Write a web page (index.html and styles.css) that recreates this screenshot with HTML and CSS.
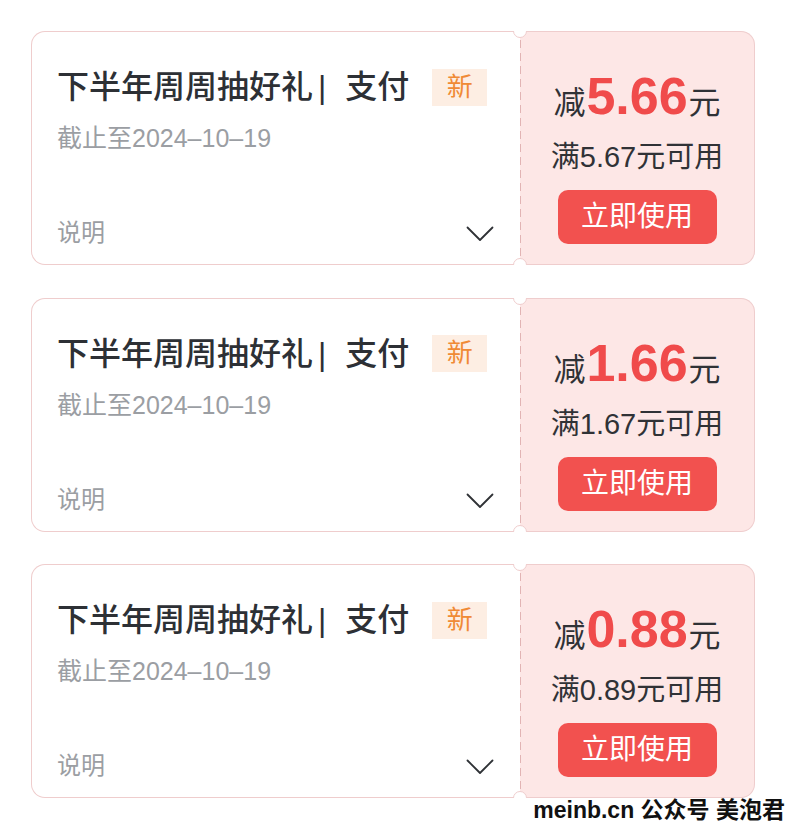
FILE: index.html
```html
<!DOCTYPE html>
<html lang="zh-CN">
<head>
<meta charset="utf-8">
<title>优惠券</title>
<link rel="stylesheet" href="styles.css">
</head>
<body>
<div class="list">
  <div class="coupon">
    <div class="info">
      <div class="title-row"><span class="title">下半年周周抽好礼<span class="bar">|</span>支付</span><span class="badge">新</span></div>
      <div class="date">截止至2024–10–19</div>
      <div class="desc-row"><span class="desc">说明</span><svg class="chev" width="28" height="16" viewBox="0 0 28 16"><polyline points="1.5,1.5 14,14 26.5,1.5" fill="none" stroke="#2f3236" stroke-width="1.8" stroke-linecap="round" stroke-linejoin="round"/></svg></div>
    </div>
    <div class="value">
      <div class="amount"><span class="unit">减</span><span class="num">5.66</span><span class="unit">元</span></div>
      <div class="cond">满5.67元可用</div>
      <button class="use">立即使用</button>
    </div>
    <span class="notch notch-top"></span><span class="notch notch-bottom"></span>
  </div>
  <div class="coupon">
    <div class="info">
      <div class="title-row"><span class="title">下半年周周抽好礼<span class="bar">|</span>支付</span><span class="badge">新</span></div>
      <div class="date">截止至2024–10–19</div>
      <div class="desc-row"><span class="desc">说明</span><svg class="chev" width="28" height="16" viewBox="0 0 28 16"><polyline points="1.5,1.5 14,14 26.5,1.5" fill="none" stroke="#2f3236" stroke-width="1.8" stroke-linecap="round" stroke-linejoin="round"/></svg></div>
    </div>
    <div class="value">
      <div class="amount"><span class="unit">减</span><span class="num">1.66</span><span class="unit">元</span></div>
      <div class="cond">满1.67元可用</div>
      <button class="use">立即使用</button>
    </div>
    <span class="notch notch-top"></span><span class="notch notch-bottom"></span>
  </div>
  <div class="coupon">
    <div class="info">
      <div class="title-row"><span class="title">下半年周周抽好礼<span class="bar">|</span>支付</span><span class="badge">新</span></div>
      <div class="date">截止至2024–10–19</div>
      <div class="desc-row"><span class="desc">说明</span><svg class="chev" width="28" height="16" viewBox="0 0 28 16"><polyline points="1.5,1.5 14,14 26.5,1.5" fill="none" stroke="#2f3236" stroke-width="1.8" stroke-linecap="round" stroke-linejoin="round"/></svg></div>
    </div>
    <div class="value">
      <div class="amount"><span class="unit">减</span><span class="num">0.88</span><span class="unit">元</span></div>
      <div class="cond">满0.89元可用</div>
      <button class="use">立即使用</button>
    </div>
    <span class="notch notch-top"></span><span class="notch notch-bottom"></span>
  </div>
</div>
<div class="mark">meinb.cn 公众号 美泡君</div>
</body>
</html>
```
FILE: styles.css
```css
html, body {
  margin: 0;
  padding: 0;
  background: #ffffff;
}
body {
  font-family: "Liberation Sans", "Noto Sans CJK SC", sans-serif;
  color: #303236;
}
.list {
  padding: 31px 32px 0 31px;
  display: flex;
  flex-direction: column;
  gap: 32.5px;
}
.coupon {
  position: relative;
  display: flex;
  height: 234px;
  overflow: hidden;
}
.info {
  width: 489px;
  box-sizing: border-box;
  border: 1px solid #efcdcd;
  border-right: none;
  border-radius: 14px 0 0 14px;
  background: #ffffff;
  padding: 35px 26px 15px 25px;
  display: flex;
  flex-direction: column;
}
.title-row {
  display: flex;
  align-items: center;
  height: 40px;
}
.title {
  font-size: 32px;
  line-height: 40px;
  font-weight: 500;
  color: #2d3035;
  white-space: nowrap;
}
.bar {
  display: inline-block;
  margin: 0 19px 0 5px;
  font-weight: 400;
}
.badge {
  margin-left: 23px;
  width: 55px;
  height: 37px;
  background: #fdeee3;
  color: #f08a35;
  font-size: 26px;
  line-height: 37px;
  text-align: center;
}
.date {
  margin-top: 15px;
  font-size: 25px;
  line-height: 32px;
  color: #9b9ea3;
}
.desc-row {
  margin-top: auto;
  height: 32px;
  display: flex;
  align-items: center;
  justify-content: space-between;
}
.desc {
  font-size: 24px;
  line-height: 32px;
  color: #9b9ea3;
}
.chev {
  display: block;
  margin-top: 2px;
}
.value {
  position: relative;
  flex: 1;
  background: #fde7e6;
  border: 1px solid #efcdcd;
  border-left: none;
  border-radius: 0 14px 14px 0;
  display: flex;
  flex-direction: column;
  align-items: center;
  padding-top: 39px;
}
.value::before {
  content: "";
  position: absolute;
  left: 0;
  top: 8px;
  bottom: 8px;
  width: 1px;
  background: repeating-linear-gradient(to bottom, #e2b4b4 0 8px, transparent 8px 13px);
}
.amount {
  line-height: 50px;
  height: 50px;
  white-space: nowrap;
  display: flex;
  align-items: baseline;
}
.unit {
  font-size: 32px;
  color: #303236;
}
.num {
  font-size: 52px;
  font-weight: bold;
  color: #f04b4b;
  margin: 0 1px;
}
.cond {
  margin-top: 19px;
  font-size: 29px;
  line-height: 34px;
  color: #303236;
  white-space: nowrap;
}
.use {
  margin-top: 16px;
  width: 159px;
  height: 54px;
  border: none;
  border-radius: 10px;
  background: #f2514f;
  color: #ffffff;
  font-family: "Liberation Sans", "Noto Sans CJK SC", sans-serif;
  font-size: 28px;
  line-height: 54px;
  padding: 0;
}
.notch {
  position: absolute;
  left: 482px;
  width: 14px;
  height: 14px;
  box-sizing: border-box;
  border-radius: 50%;
  background: #ffffff;
  border: 1px solid #efcdcd;
}
.notch-top {
  top: -7px;
}
.notch-bottom {
  bottom: -7px;
}
.mark {
  text-align: right;
  padding-right: 2px;
  margin-top: 0;
  font-size: 23px;
  line-height: 24px;
  font-weight: bold;
  color: #111111;
}
```
